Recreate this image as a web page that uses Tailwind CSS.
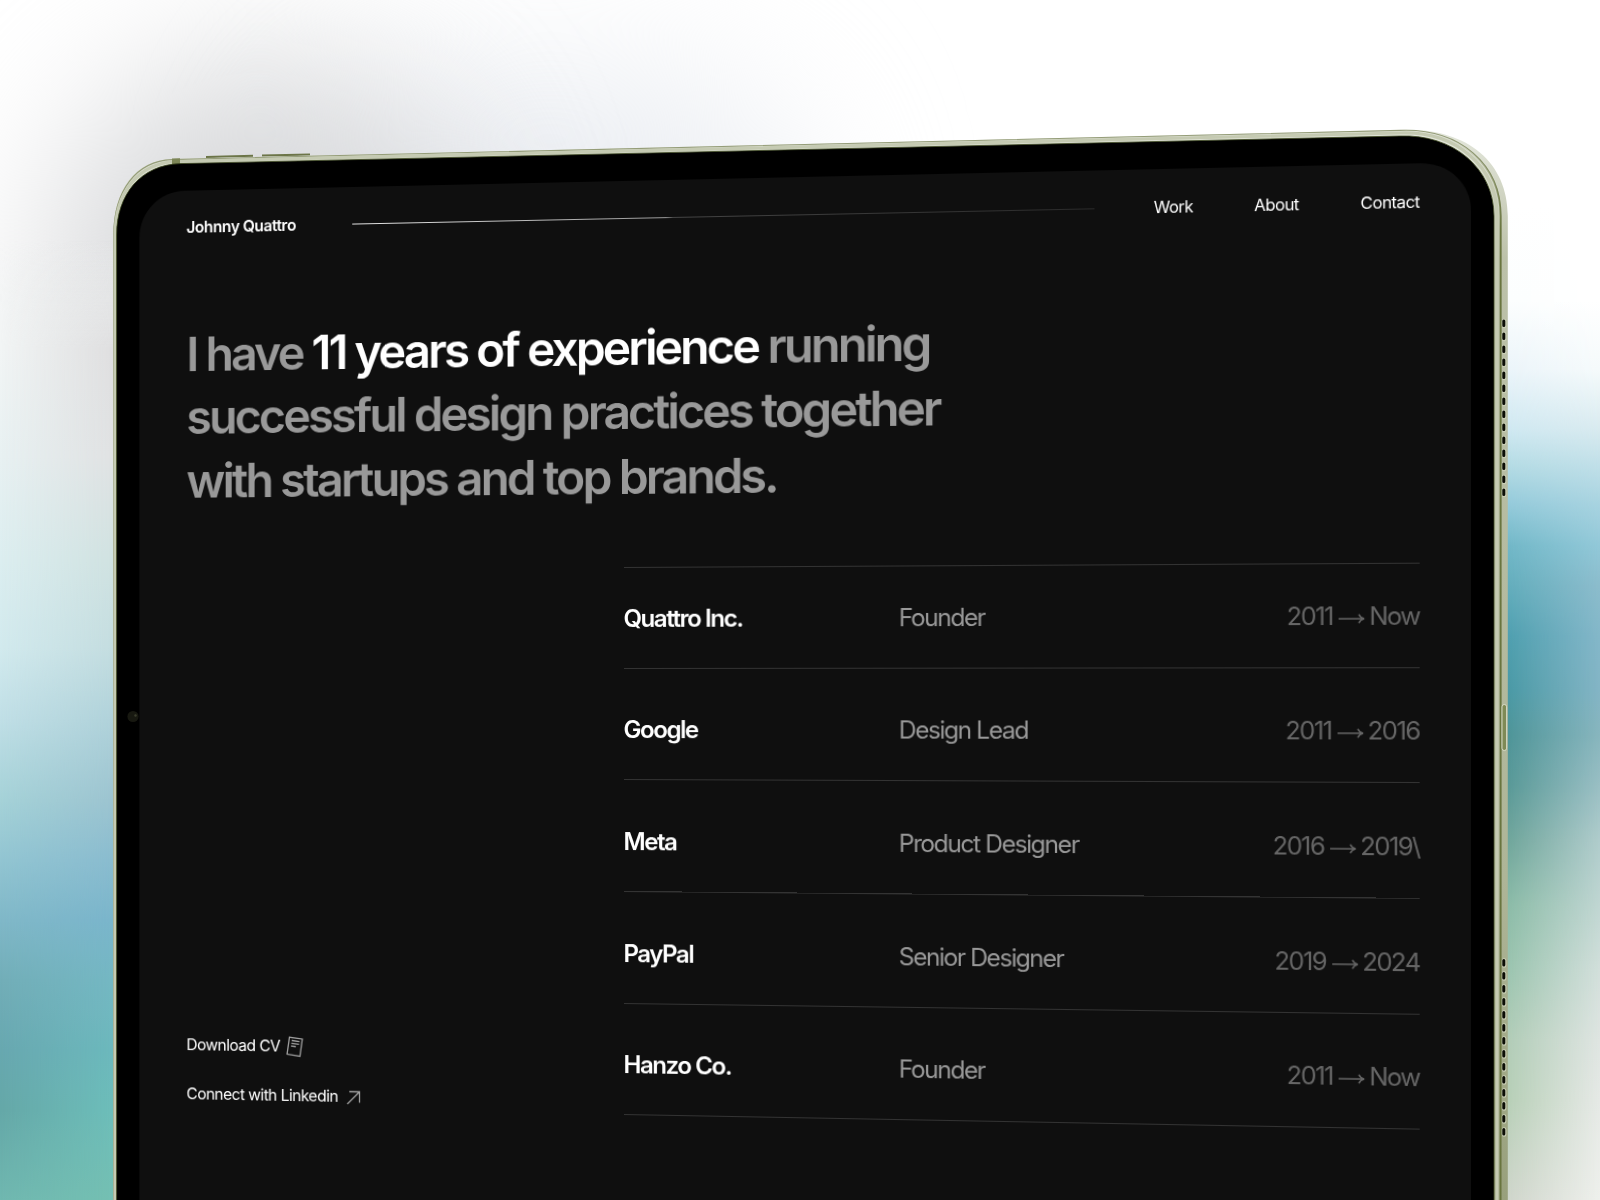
<!DOCTYPE html>
<html lang="en">
  <head>
    <meta charset="UTF-8" />
    <title>Johnny Quattro</title>
    <script src="https://cdn.jsdelivr.net/npm/@tailwindcss/browser@4"></script>
  </head>
  <body class="bg-white font-['Inter',sans-serif] text-white">
  <div class="relative w-[1600px] h-[1200px] overflow-hidden">
    <!-- backdrop -->
    <div class="absolute inset-0 overflow-hidden">
      <div class="absolute left-[300px] top-[80px] w-[500px] h-[300px] rounded-full bg-[#eaedf2] blur-[80px]"></div>
      <div class="absolute left-[50px] top-[60px] w-[420px] h-[550px] rounded-full bg-[#d8d9db] blur-[75px]"></div>
      <div class="absolute left-0 top-0 w-[130px] h-full bg-[linear-gradient(to_bottom,transparent_20%,#f2f5f5_29%,#e8f1f2_38%,#dceef0_46.7%,#d2eaee_54%,#c0dfe6_60%,#a5d2d8_66.7%,#92c5d2_71.7%,#80b8c8_76.7%,#72aeb8_81.7%,#68a8b0_87.5%,#65a8a8_92.5%,#70b8b0_100%)]"></div>
      <div class="absolute left-0 top-0 w-[130px] h-full bg-[linear-gradient(to_bottom,transparent_20%,#dfdfe0_29%,#e0e2e3_38%,#d0e2e1_46.7%,#c4dde0_54%,#b0d2da_60%,#9cc4d0_66.7%,#8abccf_71.7%,#7ab5cb_76.7%,#74b7c2_81.7%,#6cb8bc_87.5%,#6dbdb9_92.5%,#74bfb2_100%)] [mask-image:linear-gradient(to_right,transparent,black_85%)]"></div>
      <div class="absolute right-0 top-0 w-[100px] h-full bg-[linear-gradient(to_bottom,#fff_17%,#fcfefe_25%,#ecf5fa_30.8%,#d0e9f2_35.8%,#b5dce5_38.8%,#95cbdb_42%,#72b8c8_45.5%,#64aebd_48.8%,#50a0b0_53%,#4b9aa6_57.5%,#4f9599_61.3%,#5a9a98_65.5%,#70a69c_70%,#8cbca8_75.4%,#9cc5b0_80.8%,#b2cdb8_86.7%,#b8d0b8_91.7%,#d0d6cc_100%)]"></div>
      <div class="absolute right-0 top-0 w-[100px] h-full bg-[linear-gradient(to_bottom,#fff_17%,#fff_25%,#f5fafb_30.8%,#d8eaef_35.8%,#c0dfe8_38.8%,#a8d3e0_42%,#92c8d8_45.5%,#8cbccc_48.8%,#84b7c9_53%,#84b5c5_57.5%,#88b6be_61.3%,#9abfc4_65.5%,#b0cccc_70%,#c0d6d2_75.4%,#d2dfdb_80.8%,#dfe5e2_86.7%,#e6e9e6_91.7%,#eef0ec_100%)] [mask-image:linear-gradient(to_right,transparent_8%,black)]"></div>
    </div>

    <!-- tablet body -->
    <svg class="absolute inset-0" width="1600" height="1200" viewBox="0 0 1600 1200" fill="none">
      <defs>
        <linearGradient id="side" x1="0" y1="130" x2="0" y2="1200" gradientUnits="userSpaceOnUse">
          <stop offset="0" stop-color="#e4e7dc" />
          <stop offset="0.12" stop-color="#bcc1a9" />
          <stop offset="0.7" stop-color="#aeb597" />
          <stop offset="1" stop-color="#98a07c" />
        </linearGradient>
        <linearGradient id="groove" x1="0" y1="132" x2="0" y2="230" gradientUnits="userSpaceOnUse">
          <stop offset="0" stop-color="#69753f" stop-opacity="0" />
          <stop offset="1" stop-color="#69753f" />
        </linearGradient>
      </defs>
      <path d="M206 157L253 155.8M262 155.6L310 154.4" stroke="#6c7548" stroke-width="2" />
      <path d="M113.3 1210V235C113.3 190 135 160 172 159L1400 130C1464 127 1507.8 160 1507.8 216V1210Z" fill="url(#side)" />
      <path d="M113.8 1210V235C113.8 191 136 161 172 159.6L1400 130.4C1460 128 1501 164 1501 216V1210" stroke="#959d79" stroke-width="1.1" />
      <path d="M115.2 1210V235C115.2 193 138 163 176 161.5L1400 133C1456 131 1497 166 1497 216V1210" stroke="#c5cab2" stroke-width="3.2" />
      <path d="M1410 132C1462 132 1500.6 166 1500.6 216V1210" stroke="url(#groove)" stroke-width="1.8" />
      <path d="M172 158.5L180 158.3V164L172 165Z" fill="#7d8657" />
      <path d="M116.6 1210V235C116.6 194 141 165 180 163.6L1400 136C1453 134 1494 168 1494 216V1210Z" fill="#000" stroke="#3f4a22" stroke-width="0.8" />
      <g stroke="#c9ceb5" stroke-width="4.6" stroke-linecap="round" stroke-dasharray="5 8">
        <path d="M1504.1 321V495" />
        <path d="M1504.1 960.5V1135" />
      </g>
      <g stroke="#0b0d05" stroke-width="3" stroke-linecap="round" stroke-dasharray="4.6 8.4">
        <path d="M1503.8 321V495" />
        <path d="M1503.8 960.5V1135" />
      </g>
      <rect x="1502" y="704.5" width="4.6" height="46" rx="2.3" fill="#7f8a56" stroke="#dfe2cf" stroke-width="0.9" />
      <circle cx="133" cy="716.5" r="5.6" fill="#171810" />
      <circle cx="135.5" cy="715.5" r="1.2" fill="#3a3c2c" />
    </svg>

    <!-- screen, tilted around the vertical axis -->
    <div class="absolute left-0 top-0 w-[1600px] h-[1240px] pl-[129px] pt-[181px] overflow-hidden origin-[623px_692px] [transform:matrix3d(1,0,0,-0.0000435,0,1,0,0,0,0,1,0,0,0,0,1)]">
      <main class="flex flex-col w-[1312px] h-[1059px] rounded-t-[47px] bg-[#0f0f0f] pl-[49px] pr-[48px]">
        <header class="flex items-center h-[24px] mt-[26px] text-[16px] leading-[24px] tracking-[-0.035em]">
          <span class="font-semibold w-[171px] pb-[2px] tracking-[-0.028em]">Johnny Quattro</span>
          <div class="h-px w-[736px] mb-[2px] bg-[linear-gradient(to_right,#e5e5e5,#999_43%,#444_44%,#2a2a2a_100%)]"></div>
          <nav class="flex flex-1 justify-end gap-[58px] pb-[3px]">
            <a>Work</a>
            <a>About</a>
            <a>Contact</a>
          </nav>
        </header>

        <h1 class="mt-[84.5px] text-[48px] leading-[64.5px] font-semibold tracking-[-0.0598em] text-[#999] whitespace-nowrap">
          I have <span class="text-white">11 years of experience</span> running<br />
          successful design practices together<br />
          with startups and top brands.
        </h1>

        <div class="flex justify-between mt-[57.5px]">
          <div class="flex flex-col justify-end gap-[26px] pb-[2px] text-[16px] leading-[24px] tracking-[-0.034em]">
            <a class="flex items-center gap-[6px]">
              Download CV
              <svg class="w-[18px] h-[22px] mt-[2px]" viewBox="0 0 18 22" fill="none" stroke="#a3a3a3" stroke-width="1.3">
                <g transform="rotate(8 9 11)">
                  <rect x="2.2" y="2" width="13.4" height="17.6" />
                  <path d="M5 5H13M5 7.8H13M5 10.6H10" />
                </g>
              </svg>
            </a>
            <a class="flex items-center gap-[9px]">
              Connect with Linkedin
              <svg class="w-[15px] h-[15px] mt-[3px]" viewBox="0 0 15 15" fill="none" stroke="#a3a3a3" stroke-width="1.3">
                <path d="M1 14L13.5 1.5M3 1.5H13.5V12.5" />
              </svg>
            </a>
          </div>

          <div class="w-[769.5px] border-t border-[#333] text-[24px] leading-[32px] tracking-[-0.06em]">
            <div class="grid grid-cols-[272px_1fr_auto] h-[101px] pt-[35px] border-b border-[#333]">
              <span class="font-semibold">Quattro Inc.</span>
              <span class="text-[#999]">Founder</span>
              <span class="flex items-start gap-[5.5px] text-[#666]">
                2011
                <svg class="w-[25px] h-[10px] mt-[13px] -mr-[2px]" viewBox="0 0 25 10" fill="none" stroke="currentColor" stroke-width="1.5"><path d="M0 5H24M19 0.8C20 3 21.6 4.4 24 5C21.6 5.6 20 7 19 9.2" /></svg>
                Now
              </span>
            </div>
            <div class="grid grid-cols-[272px_1fr_auto] h-[111px] pt-[45px] border-b border-[#333]">
              <span class="font-semibold">Google</span>
              <span class="text-[#999]">Design Lead</span>
              <span class="flex items-start gap-[5.5px] text-[#666]">
                2011
                <svg class="w-[25px] h-[10px] mt-[13px] -mr-[2px]" viewBox="0 0 25 10" fill="none" stroke="currentColor" stroke-width="1.5"><path d="M0 5H24M19 0.8C20 3 21.6 4.4 24 5C21.6 5.6 20 7 19 9.2" /></svg>
                2016
              </span>
            </div>
            <div class="grid grid-cols-[272px_1fr_auto] h-[112px] pt-[46px] border-b border-[#333]">
              <span class="font-semibold">Meta</span>
              <span class="text-[#999]">Product Designer</span>
              <span class="flex items-start gap-[5.5px] text-[#666]">
                2016
                <svg class="w-[25px] h-[10px] mt-[13px] -mr-[2px]" viewBox="0 0 25 10" fill="none" stroke="currentColor" stroke-width="1.5"><path d="M0 5H24M19 0.8C20 3 21.6 4.4 24 5C21.6 5.6 20 7 19 9.2" /></svg>
                2019\
              </span>
            </div>
            <div class="grid grid-cols-[272px_1fr_auto] h-[112px] pt-[46px] border-b border-[#333]">
              <span class="font-semibold">PayPal</span>
              <span class="text-[#999]">Senior Designer</span>
              <span class="flex items-start gap-[5.5px] text-[#666]">
                2019
                <svg class="w-[25px] h-[10px] mt-[13px] -mr-[2px]" viewBox="0 0 25 10" fill="none" stroke="currentColor" stroke-width="1.5"><path d="M0 5H24M19 0.8C20 3 21.6 4.4 24 5C21.6 5.6 20 7 19 9.2" /></svg>
                2024
              </span>
            </div>
            <div class="grid grid-cols-[272px_1fr_auto] h-[111px] pt-[45px] border-b border-[#333]">
              <span class="font-semibold">Hanzo Co.</span>
              <span class="text-[#999]">Founder</span>
              <span class="flex items-start gap-[5.5px] text-[#666]">
                2011
                <svg class="w-[25px] h-[10px] mt-[13px] -mr-[2px]" viewBox="0 0 25 10" fill="none" stroke="currentColor" stroke-width="1.5"><path d="M0 5H24M19 0.8C20 3 21.6 4.4 24 5C21.6 5.6 20 7 19 9.2" /></svg>
                Now
              </span>
            </div>
          </div>
        </div>
      </main>
    </div>
  </div>
  </body>
</html>
